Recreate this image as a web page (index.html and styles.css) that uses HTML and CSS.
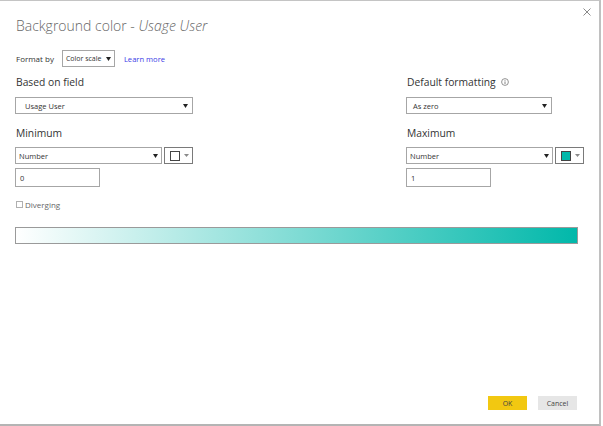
FILE: index.html
```html
<!DOCTYPE html>
<html>
<head>
<meta charset="utf-8">
<link rel="stylesheet" href="styles.css">
</head>
<body>
<div class="dialog">
  <button class="close" aria-label="Close">
    <svg width="8" height="8" viewBox="0 0 8 8"><path d="M0.5 0.5 L7.5 7.5 M7.5 0.5 L0.5 7.5" stroke="#8a8a8a" stroke-width="1" fill="none"/></svg>
  </button>
  <h1 class="title">Background color - <em>Usage User</em></h1>
  <div class="format-row">
    <span class="small">Format by</span>
    <div class="select select-format"><span>Color scale</span><svg class="caret" width="5" height="4" viewBox="0 0 5 4"><path d="M0 0 H5 L2.5 4 Z" fill="#222"/></svg></div>
    <a class="link">Learn more</a>
  </div>
  <div class="grid">
    <div class="col">
      <div class="label">Based on field</div>
      <div class="select select-field"><span>Usage User</span><svg class="caret" width="5" height="4" viewBox="0 0 5 4"><path d="M0 0 H5 L2.5 4 Z" fill="#222"/></svg></div>
      <div class="label label-mm">Minimum</div>
      <div class="pick-row">
        <div class="select select-num"><span>Number</span><svg class="caret" width="5" height="4" viewBox="0 0 5 4"><path d="M0 0 H5 L2.5 4 Z" fill="#222"/></svg></div>
        <div class="swatch-btn"><span class="swatch swatch-white"></span><svg width="5" height="3" viewBox="0 0 5 3"><path d="M0 0 H5 L2.5 3 Z" fill="#8a8a8a"/></svg></div>
      </div>
      <div class="input">0</div>
      <div class="check-row"><span class="checkbox"></span><span class="small muted">Diverging</span></div>
    </div>
    <div class="col">
      <div class="label">Default formatting <svg class="info" width="8" height="8" viewBox="0 0 8 8"><circle cx="4" cy="4" r="3.4" fill="none" stroke="#777" stroke-width="0.8"/><path d="M4 3.4 V6" stroke="#777" stroke-width="0.9"/><circle cx="4" cy="2.3" r="0.5" fill="#777"/></svg></div>
      <div class="select select-default"><span>As zero</span><svg class="caret" width="5" height="4" viewBox="0 0 5 4"><path d="M0 0 H5 L2.5 4 Z" fill="#222"/></svg></div>
      <div class="label label-mm">Maximum</div>
      <div class="pick-row">
        <div class="select select-num"><span>Number</span><svg class="caret" width="5" height="4" viewBox="0 0 5 4"><path d="M0 0 H5 L2.5 4 Z" fill="#222"/></svg></div>
        <div class="swatch-btn"><span class="swatch swatch-teal"></span><svg width="5" height="3" viewBox="0 0 5 3"><path d="M0 0 H5 L2.5 3 Z" fill="#8a8a8a"/></svg></div>
      </div>
      <div class="input">1</div>
    </div>
  </div>
  <div class="gradient"></div>
  <div class="footer">
    <button class="btn btn-ok">OK</button>
    <button class="btn btn-cancel">Cancel</button>
  </div>
</div>
</body>
</html>
```

FILE: styles.css
```css
* { box-sizing: border-box; }
html, body { margin: 0; padding: 0; background: #fff; }
body { font-family: "Open Sans", "Noto Sans", sans-serif; color: #333; }

.dialog {
  position: relative;
  width: 601px;
  height: 426px;
  border-top: 1px solid #c4c4c4;
  border-right: 2px solid #c0c0c0;
  border-bottom: 2px solid #b4b4b4;
  padding: 0 0 0 15px;
  display: flex;
  flex-direction: column;
}

.close {
  position: absolute;
  top: 6px;
  right: 7px;
  width: 10px;
  height: 10px;
  padding: 0;
  border: 0;
  background: none;
  display: flex;
  align-items: center;
  justify-content: center;
}

.title {
  margin: 15px 0 0 1px;
  font-size: 14px;
  line-height: 20px;
  font-weight: 300;
  color: #666;
}
.title em { font-style: italic; }

.format-row {
  margin-top: 14px;
  display: flex;
  align-items: center;
  height: 17px;
}
.small { font-size: 8px; color: #333; white-space: nowrap; }
.muted { color: #666; }
.format-row .small { margin-left: 1px; }

.select {
  height: 17px;
  border: 1px solid #a6a6a6;
  background: #fff;
  display: flex;
  align-items: center;
  justify-content: space-between;
  font-size: 7.5px;
  color: #333;
  white-space: nowrap;
}
.select-format { width: 53px; margin-left: 8px; padding: 0 3px 0 3px; font-size: 7px; }
.link { margin-left: 9px; font-size: 7.6px; color: #3b3be6; white-space: nowrap; }

.grid {
  display: grid;
  grid-template-columns: 391px 1fr;
  margin-top: 8px;
}
.col { display: flex; flex-direction: column; }

.label {
  font-size: 10.3px;
  line-height: 14px;
  color: #333;
  display: flex;
  align-items: center;
  gap: 5px;
  padding-left: 1px;
}
.info { margin-top: -1px; }
.label-mm { margin-top: 12px; }

.select-field { width: 178px; margin-top: 8px; padding: 0 4px 0 9px; }
.select-default { width: 146px; margin-top: 8px; padding: 0 4px 0 6px; }

.pick-row { display: flex; gap: 2px; margin-top: 7px; }
.select-num { width: 147px; padding: 0 3px 0 3px; }
.swatch-btn {
  width: 29px;
  height: 17px;
  border: 1px solid #7a7a7a;
  display: flex;
  align-items: center;
  gap: 4px;
  padding-left: 5px;
}
.swatch { width: 10px; height: 10px; border: 1px solid #444; }
.swatch-white { background: #fff; }
.swatch-teal { background: #01b8aa; }

.input {
  width: 85px;
  height: 19px;
  margin-top: 4px;
  border: 1px solid #a6a6a6;
  font-size: 7.5px;
  display: flex;
  align-items: center;
  padding-left: 4px;
}

.check-row {
  display: flex;
  align-items: center;
  gap: 2px;
  margin-top: 13px;
  height: 8px;
  padding-left: 1px;
}
.checkbox { width: 7px; height: 7px; border: 1px solid #b0b0b0; }

.gradient {
  width: 563px;
  height: 17px;
  margin-top: 19px;
  border: 1px solid #9a9a9a;
  background: linear-gradient(to right, #ffffff, #01b8aa);
}

.footer {
  margin-top: auto;
  margin-bottom: 14px;
  display: flex;
  justify-content: flex-end;
  gap: 11px;
  padding-right: 22px;
}
.btn {
  width: 39px;
  height: 14px;
  padding: 0;
  border: 0;
  font-family: inherit;
  font-size: 7px;
  color: #444;
}
.btn-ok { background: #f2c811; }
.btn-cancel { background: #e6e6e6; }
```
